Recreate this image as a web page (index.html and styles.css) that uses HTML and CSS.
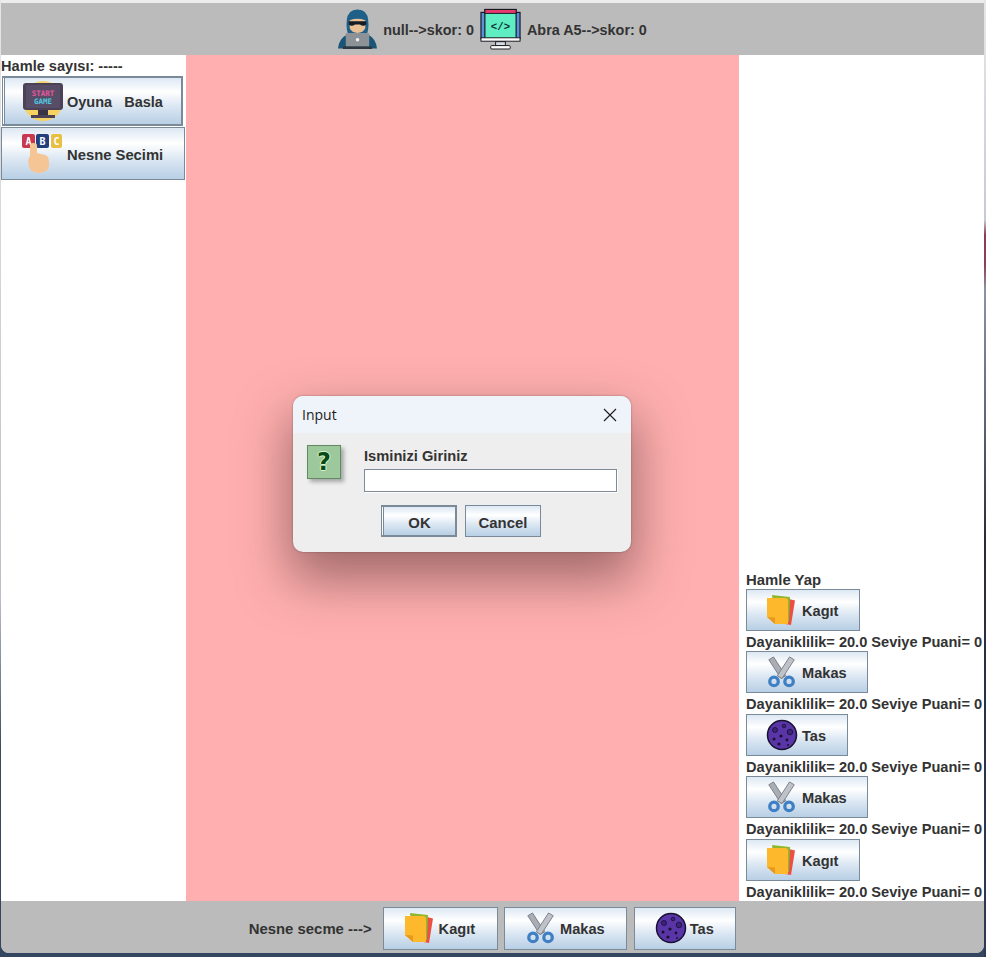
FILE: index.html
```html
<!DOCTYPE html>
<html lang="tr">
<head>
<meta charset="utf-8">
<title>Input</title>
<link rel="stylesheet" href="styles.css">
</head>
<body>
<svg class="defs" width="0" height="0" aria-hidden="true">
  <symbol id="paper" viewBox="0 0 32 32">
    <path d="M23 5 L29 6.500 L25 31 L19 30 Z" fill="#ee4f45"/>
    <path d="M6 1 L24 3 L23 28 L9 28 Z" fill="#8fb82e"/>
    <path d="M1 4 H19 Q22 4 22 7 V30 L9 30 L1 23 Z" fill="#fdb92b"/>
    <path d="M1 23 L9 23.500 L9 30 Z" fill="#e8981c"/>
  </symbol>
  <symbol id="scissors" viewBox="0 0 32 34">
    <path d="M2 4 L7 1 L20 21 L15 24 Z" fill="#a9aeb5" stroke="#777c84" stroke-width="1"/>
    <path d="M29 4 L24 1 L11 21 L16 24 Z" fill="#bfc3c9" stroke="#777c84" stroke-width="1"/>
    <circle cx="7.500" cy="27" r="4.500" fill="none" stroke="#3f7fc4" stroke-width="3.500"/>
    <circle cx="23.500" cy="27" r="4.500" fill="none" stroke="#3f7fc4" stroke-width="3.500"/>
  </symbol>
  <symbol id="rock" viewBox="0 0 32 32">
    <circle cx="16" cy="16" r="14.500" fill="#5a35a8" stroke="#17102e" stroke-width="1.500"/>
    <circle cx="9" cy="11" r="2.500" fill="#3e2380" stroke="#17102e" stroke-width=".8"/>
    <circle cx="18" cy="7" r="1.800" fill="#3e2380" stroke="#17102e" stroke-width=".8"/>
    <circle cx="24" cy="13" r="2.800" fill="#3e2380" stroke="#17102e" stroke-width=".8"/>
    <circle cx="15" cy="17" r="1.600" fill="#17102e"/>
    <circle cx="8" cy="20" r="1.500" fill="#17102e"/>
    <circle cx="21" cy="21" r="1.400" fill="#17102e"/>
    <circle cx="13" cy="25" r="1.600" fill="#17102e"/>
    <circle cx="22" cy="26" r="1" fill="#17102e"/>
  </symbol>
</svg>

<div class="window">
  <header class="top-bar">
    <svg class="icon-user" viewBox="0 0 40 42" aria-hidden="true">
      <path d="M0 41 Q1 31 9 27 L31 27 Q39 31 40 41 Z" fill="#1a5578"/>
      <path d="M20 1 Q30 1 31 12 Q32 21 29 28 L11 28 Q8 21 9 12 Q10 1 20 1 Z" fill="#1f6088"/>
      <path d="M12 12 Q20 9 28 12 L28 20 Q26 25 20 25 Q14 25 12 20 Z" fill="#e9bf96"/>
      <path d="M11 13 H29 V16.500 Q26 19 22.500 16.500 H17.500 Q14 19 11 16.500 Z" fill="#141d25"/>
      <rect x="8" y="25" width="24" height="14" rx="1" fill="#8d9297"/>
      <rect x="5" y="39" width="30" height="2.500" fill="#31373d"/>
      <circle cx="20" cy="32" r="1.800" fill="#eef0f2"/>
    </svg>
    <span>null--&gt;skor: 0</span>
    <svg class="icon-top" viewBox="0 0 42 42" aria-hidden="true">
      <rect x="1" y="4" width="40" height="27" fill="#5a8fdc" stroke="#17171f" stroke-width="1.200"/>
      <rect x="5" y="1" width="32" height="31" fill="#5eeec1" stroke="#17171f" stroke-width="1.200"/>
      <rect x="5" y="1" width="32" height="4" fill="#e8396f" stroke="#17171f" stroke-width="1"/>
      <rect x="1" y="30" width="40" height="3.500" fill="#fff" stroke="#17171f"/>
      <rect x="16" y="34" width="10" height="4" fill="#d8dce0" stroke="#17171f"/>
      <rect x="11" y="38" width="20" height="3.500" rx="1" fill="#fff" stroke="#17171f"/>
      <text x="21" y="22" class="svg-code">&lt;/&gt;</text>
    </svg>
    <span>Abra A5--&gt;skor: 0</span>
  </header>

  <main class="middle">
    <aside class="left-panel">
      <div class="left-title">Hamle sayısı: -----</div>
      <button class="btn btn-left btn-focus" type="button">
        <svg class="icon-left" viewBox="0 0 40 40" aria-hidden="true">
          <circle cx="20" cy="20" r="20" fill="#f6d262"/>
          <rect x="0" y="2" width="40" height="27" rx="3" fill="#4b4257"/>
          <rect x="3" y="4" width="34" height="23" fill="#574d66"/>
          <rect x="15" y="29" width="10" height="5" fill="#3a3343"/>
          <rect x="8" y="34" width="24" height="3" fill="#4b4257"/>
          <text x="20" y="15" class="svg-start">START</text>
          <text x="20" y="23" class="svg-game">GAME</text>
        </svg>
        <span class="pre">Oyuna   Basla</span>
      </button>
      <button class="btn btn-left btn-second" type="button">
        <svg class="icon-left" viewBox="0 0 40 40" aria-hidden="true">
          <rect x="0" y="0" width="13" height="14" rx="2" fill="#c9384f"/>
          <rect x="14" y="0" width="13" height="14" rx="2" fill="#24407c"/>
          <rect x="29" y="0" width="11" height="14" rx="2" fill="#e9bf42"/>
          <text x="6.500" y="11" class="svg-abc">A</text>
          <text x="20.500" y="11" class="svg-abc">B</text>
          <text x="34.500" y="11" class="svg-abc">C</text>
          <path d="M8 11 Q8 9 11 9 Q15 9 15 11 V19 L23 21 Q27 22 27 28 V32 Q26 39 17 39 Q8 39 7 32 Q5 26 8 22 Z" fill="#f5c596"/>
        </svg>
        <span>Nesne Secimi</span>
      </button>
    </aside>

    <section class="board"></section>

    <aside class="right-panel">
      <div class="move-title">Hamle Yap</div>
      <button class="btn btn-move" type="button"><svg class="icon-item"><use href="#paper"/></svg><span>Kagıt</span></button>
      <div class="stat">Dayaniklilik= 20.0 Seviye Puani= 0</div>
      <button class="btn btn-move" type="button"><svg class="icon-item"><use href="#scissors"/></svg><span>Makas</span></button>
      <div class="stat">Dayaniklilik= 20.0 Seviye Puani= 0</div>
      <button class="btn btn-move" type="button"><svg class="icon-item"><use href="#rock"/></svg><span>Tas</span></button>
      <div class="stat">Dayaniklilik= 20.0 Seviye Puani= 0</div>
      <button class="btn btn-move" type="button"><svg class="icon-item"><use href="#scissors"/></svg><span>Makas</span></button>
      <div class="stat">Dayaniklilik= 20.0 Seviye Puani= 0</div>
      <button class="btn btn-move" type="button"><svg class="icon-item"><use href="#paper"/></svg><span>Kagıt</span></button>
      <div class="stat">Dayaniklilik= 20.0 Seviye Puani= 0</div>
    </aside>
  </main>

  <footer class="bottom-bar">
    <span class="pick-label">Nesne secme ---&gt;</span>
    <button class="btn btn-pick" type="button"><svg class="icon-item"><use href="#paper"/></svg><span>Kagıt</span></button>
    <button class="btn btn-pick" type="button"><svg class="icon-item"><use href="#scissors"/></svg><span>Makas</span></button>
    <button class="btn btn-pick" type="button"><svg class="icon-item"><use href="#rock"/></svg><span>Tas</span></button>
  </footer>
</div>

<div class="dialog" role="dialog" aria-label="Input">
  <div class="dialog-title">
    <span>Input</span>
    <svg class="close" viewBox="0 0 14 14" aria-hidden="true"><path d="M1 1 L13 13 M13 1 L1 13" stroke="#1a1a1a" stroke-width="1.100" fill="none"/></svg>
  </div>
  <div class="dialog-body">
    <div class="question"><span>?</span></div>
    <div class="dialog-form">
      <label class="prompt" for="name">Isminizi Giriniz</label>
      <input class="name-input" id="name" type="text">
    </div>
  </div>
  <div class="dialog-actions">
    <button class="btn btn-dialog btn-focus" type="button"><span>OK</span></button>
    <button class="btn btn-dialog" type="button"><span>Cancel</span></button>
  </div>
</div>
</body>
</html>
```

FILE: styles.css
```css
* { box-sizing: border-box; }

html, body { height: 100%; }

body {
  margin: 0;
  height: 957px;
  overflow: hidden;
  padding: 0 2px 4px 1px;
  font: bold 14.6px "Liberation Sans", Arial, sans-serif;
  color: #333;
  background:
    linear-gradient(180deg, #e6e6ea 0, #c9c9d2 220px, #8e3a56 235px, #8a3f5c 265px, #8d93a6 290px, #5f6478 420px, #2a2a3a 540px, #2f3a55 957px) right top / 2px 100% no-repeat,
    linear-gradient(180deg, #e6e6ea 0, #b9bec8 600px, #3b4a5e 750px, #34465f 957px);
}

.defs { position: absolute; }

.window {
  height: 953px;
  display: flex;
  flex-direction: column;
  border-top: 3px solid #ededed;
  border-radius: 0 0 8px 8px;
  overflow: hidden;
  background: #bbb;
}

.top-bar {
  height: 52px;
  flex: none;
  display: flex;
  align-items: center;
  justify-content: center;
  gap: 6px;
  font-size: 14.400px;
  background: #bbb;
}

.top-bar span { padding-top: 2px; }

.icon-top { width: 41px; height: 42px; flex: none; }

.icon-user { width: 39px; height: 42px; flex: none; }

.svg-code { font: bold 11px "Liberation Mono", monospace; fill: #12323a; text-anchor: middle; }
.svg-start { font: bold 7.500px "DejaVu Sans Mono", monospace; fill: #e8559c; text-anchor: middle; }
.svg-game { font: bold 7.500px "DejaVu Sans Mono", monospace; fill: #4fc8e0; text-anchor: middle; }
.svg-abc { font: bold 10px "DejaVu Sans Mono", monospace; fill: #fff; text-anchor: middle; }

.middle {
  flex: 1;
  min-height: 0;
  display: flex;
}

.left-panel {
  width: 185px;
  flex: none;
  display: flex;
  flex-direction: column;
  align-items: flex-start;
  background: #fff;
}

.left-title {
  height: 21px;
  padding: 2px 0 0;
  line-height: 18px;
}

.board {
  width: 553px;
  flex: none;
  background: #ffafaf;
}

.right-panel {
  flex: 1;
  min-width: 0;
  display: flex;
  flex-direction: column;
  align-items: flex-start;
  justify-content: flex-end;
  padding-left: 7px;
  overflow: hidden;
  background: #fff;
}

.move-title { height: 17px; line-height: 17px; white-space: nowrap; font-size: 14.900px; }

.stat {
  height: 20.500px;
  line-height: 22px;
  white-space: nowrap;
}

.bottom-bar {
  height: 52px;
  flex: none;
  display: flex;
  align-items: center;
  justify-content: center;
  gap: 6.500px;
  padding: 2px 0 0;
  background: #bbb;
}

.pick-label { margin-right: 4.500px; padding-top: 2px; white-space: nowrap; font-size: 14.900px; }

.btn {
  display: flex;
  align-items: center;
  justify-content: center;
  flex: none;
  margin: 0;
  padding: 0;
  border: 1px solid #7a8a99;
  color: #333;
  font: bold 14.600px "Liberation Sans", Arial, sans-serif;
  white-space: nowrap;
  background: linear-gradient(180deg, #dde8f3 0, #fff 30%, #dde8f3 60%, #b8cfe5 100%);
}

.btn span { padding-top: 2px; }

.btn-focus {
  border: 2px solid #7a8a99;
  border-left-width: 1px;
  box-shadow: inset 1px 0 #fff, inset 2px 0 #7a8a99;
}

.btn-left {
  justify-content: flex-start;
  gap: 5px;
  padding: 0 21px 0 20px;
  font-size: 14.800px;
}

.btn-left.btn-focus { height: 50px; margin-left: 1px; gap: 4px; padding: 0 18px 0 20px; font-size: 14.500px; }

.btn-second { height: 53px; margin-top: 1px; }

.icon-left { width: 40px; height: 40px; flex: none; }

.btn-move { height: 42px; padding: 0 20.500px 0 19px; gap: 4px; }

.btn-pick { height: 43px; padding: 0 21.500px 0 20px; gap: 3px; }

.icon-item { width: 32px; height: 32px; flex: none; }

.pre { white-space: pre; }

.dialog {
  position: absolute;
  left: 293px;
  top: 396px;
  width: 338px;
  height: 156px;
  display: flex;
  flex-direction: column;
  border-radius: 10px;
  overflow: hidden;
  background: #eee;
  box-shadow: 0 0 2px rgba(60, 40, 40, .5), 0 24px 50px 4px rgba(70, 40, 40, .5);
}

.dialog-title {
  height: 37px;
  flex: none;
  display: flex;
  align-items: center;
  justify-content: space-between;
  padding: 0 14px 0 9px;
  background: #eff3fa;
  font: 14px "Open Sans", "Liberation Sans", sans-serif;
  color: #1c1c1c;
}

.close { width: 14px; height: 14px; }

.dialog-body {
  display: flex;
  padding: 12px 14px 0 14px;
  gap: 23px;
}

.question {
  width: 34px;
  height: 34px;
  flex: none;
  display: flex;
  align-items: center;
  justify-content: center;
  background: #9cc89c;
  border: 1px solid #618a62;
  box-shadow: 3px 3px 4px rgba(0, 0, 0, .3);
  font: bold 24px "DejaVu Sans", sans-serif;
  color: #0b4a12;
  text-shadow: 1px 0 #d6f5d0, -1px 0 #d6f5d0, 0 1px #d6f5d0, 0 -1px #d6f5d0;
}

.dialog-form {
  flex: 1;
  display: flex;
  flex-direction: column;
  gap: 6px;
}

.prompt { height: 18px; padding-top: 3px; line-height: 17px; font-size: 14.700px; }

.name-input {
  width: 253px;
  height: 23px;
  padding: 0;
  border: 1px solid #7f8a99;
  background: #fff;
  box-shadow: 1px 1px 0 #fff;
  outline: none;
}

.dialog-actions {
  display: flex;
  padding: 13px 0 0 88px;
  gap: 8px;
}

.btn-dialog { width: 76px; height: 32px; font-size: 14.900px; }

.btn-dialog span { padding-top: 4px; }

.btn-dialog.btn-focus { padding-left: 2px; }
```
